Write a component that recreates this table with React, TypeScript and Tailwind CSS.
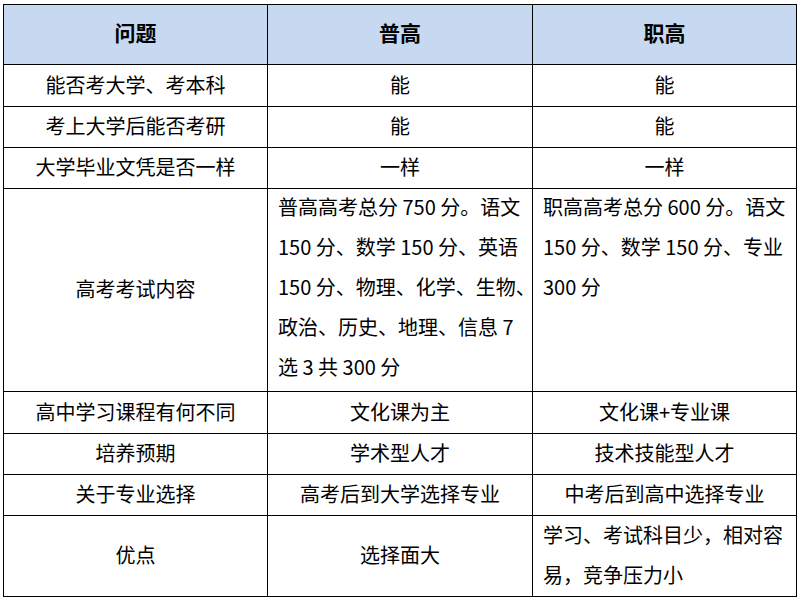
import React from "react";

const font = { fontFamily: '"Noto Sans CJK SC", "Noto Sans", sans-serif' };

type Cell = { lines: string[]; align?: "center" | "left" };
type Row = [Cell, Cell, Cell];

const c = (t: string): Cell => ({ lines: [t], align: "center" });
const l = (...lines: string[]): Cell => ({ lines, align: "left" });

const rows: Row[] = [
  [c("能否考大学、考本科"), c("能"), c("能")],
  [c("考上大学后能否考研"), c("能"), c("能")],
  [c("大学毕业文凭是否一样"), c("一样"), c("一样")],
  [
    c("高考考试内容"),
    l(
      "普高高考总分 750 分。语文",
      "150 分、数学 150 分、英语",
      "150 分、物理、化学、生物、",
      "政治、历史、地理、信息 7",
      "选 3 共 300 分"
    ),
    l("职高高考总分 600 分。语文", "150 分、数学 150 分、专业", "300 分"),
  ],
  [c("高中学习课程有何不同"), c("文化课为主"), c("文化课+专业课")],
  [c("培养预期"), c("学术型人才"), c("技术技能型人才")],
  [c("关于专业选择"), c("高考后到大学选择专业"), c("中考后到高中选择专业")],
  [c("优点"), c("选择面大"), l("学习、考试科目少，相对容", "易，竞争压力小")],
];

function CellView({ cell, top }: { cell: Cell; top: boolean }) {
  if (cell.align === "left") {
    return (
      <div
        className={`bg-white flex flex-col pl-[10px] text-[20px] leading-[40px] text-black ${
          top ? "justify-start" : "justify-center pb-[2px]"
        }`}
      >
        <div className={top ? "-mt-[2px]" : ""}>
          {cell.lines.map((t, i) => (
            <div key={i} className="whitespace-nowrap">
              {t}
            </div>
          ))}
        </div>
      </div>
    );
  }
  return (
    <div className="bg-white flex items-center justify-center pb-[2px] text-[20px] text-black whitespace-nowrap">
      {cell.lines[0]}
    </div>
  );
}

export default function App() {
  return (
    <div className="w-[802px] h-[605px] bg-white pt-[4px] pl-[3px]" style={font}>
      <div className="grid w-[794px] grid-cols-[263px_264px_263px] grid-rows-[59px_41px_40px_40px_202px_41px_40px_40px_80px] gap-px bg-black p-px">
        {["问题", "普高", "职高"].map((h) => (
          <div
            key={h}
            className="bg-[#c6d9f1] flex items-center justify-center pb-[4px] text-[21px] font-bold text-black"
          >
            {h}
          </div>
        ))}
        {rows.map((r, ri) =>
          r.map((cell, ci) => (
            <CellView key={`${ri}-${ci}`} cell={cell} top={ri === 3} />
          ))
        )}
      </div>
    </div>
  );
}
